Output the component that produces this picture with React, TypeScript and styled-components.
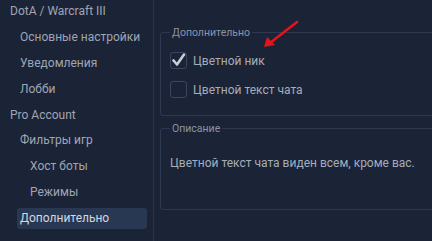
import React from "react";
import styled, { createGlobalStyle } from "styled-components";

const Global = createGlobalStyle`
  html, body { margin: 0; padding: 0; background: #1b2336; overflow: hidden; }
  body { font-family: Roboto, "Noto Sans", sans-serif; }
`;

const Page = styled.div`
  position: relative;
  display: flex;
  width: 432px;
  height: 241px;
  background: #1b2336;
  overflow: hidden;
`;

const Sidebar = styled.nav`
  flex: 0 0 153px;
  border-right: 1px solid #28324a;
  display: flex;
  flex-direction: column;
  margin-top: -1px;
`;

const Item = styled.div`
  height: 25.8px;
  display: flex;
  align-items: center;
  flex: 0 0 auto;
`;

const ItemLabel = styled.span<{ $level: number; $active?: boolean }>`
  margin-left: ${(p) => 7 + p.$level * 10}px;
  width: ${(p) => 140 - p.$level * 10 - 3}px;
  padding-left: 3px;
  height: 21px;
  line-height: 21px;
  border-radius: 3px;
  font-size: 12px;
  color: ${(p) => (p.$active ? "#d3d7de" : "#9ea6b5")};
  background: ${(p) => (p.$active ? "#283852" : "transparent")};
  white-space: nowrap;
`;

const Content = styled.main`
  flex: 0 0 310px;
  display: flex;
  flex-direction: column;
  align-items: flex-start;
  gap: 6px;
  padding: 26px 0 0 6px;
`;

const Group = styled.fieldset<{ $h: number }>`
  margin: 0;
  width: 300px;
  height: ${(p) => p.$h}px;
  box-sizing: border-box;
  border: 1px solid #2d3851;
  border-radius: 3px;
  padding: 0 0 0 9px;
  min-width: 0;
`;

const Legend = styled.legend`
  font-size: 10.5px;
  line-height: 13px;
  color: #8b94a6;
  padding: 0 2px;
  margin-left: 0;
`;

const Options = styled.div`
  display: flex;
  flex-direction: column;
  gap: 12px;
  padding-top: 13px;
`;

const Option = styled.label`
  display: flex;
  align-items: center;
  gap: 6px;
  height: 17px;
  font-size: 12px;
  color: #a6adba;
`;

const Box = styled.span`
  width: 17px;
  height: 17px;
  box-sizing: border-box;
  border: 1px solid #3a4661;
  border-radius: 3px;
  display: flex;
  align-items: center;
  justify-content: center;
  flex: 0 0 17px;
`;

const Description = styled.p`
  margin: 0;
  padding-top: 20px;
  font-size: 12px;
  line-height: 16px;
  color: #a6adba;
  white-space: nowrap;
`;

const Arrow = styled.svg`
  position: absolute;
  left: 258px;
  top: 16px;
  width: 46px;
  height: 36px;
  pointer-events: none;
`;

const items: { label: string; level: number; active?: boolean }[] = [
  { label: "DotA / Warcraft III", level: 0 },
  { label: "Основные настройки", level: 1 },
  { label: "Уведомления", level: 1 },
  { label: "Лобби", level: 1 },
  { label: "Pro Account", level: 0 },
  { label: "Фильтры игр", level: 1 },
  { label: "Хост боты", level: 2 },
  { label: "Режимы", level: 2 },
  { label: "Дополнительно", level: 1, active: true },
];

const Check = () => (
  <svg width="15" height="15" viewBox="0 0 15 15">
    <path d="M2.5 7.5 L6 11.5 L13 1.5" fill="none" stroke="#c9cdd5" strokeWidth="2.6" strokeLinecap="round" strokeLinejoin="round" />
  </svg>
);

export default function App() {
  return (
    <Page>
      <Global />
      <Sidebar>
        {items.map((it) => (
          <Item key={it.label}>
            <ItemLabel $level={it.level} $active={it.active}>{it.label}</ItemLabel>
          </Item>
        ))}
      </Sidebar>
      <Content>
        <Group $h={90}>
          <Legend>Дополнительно</Legend>
          <Options>
            <Option>
              <Box><Check /></Box>
              Цветной ник
            </Option>
            <Option>
              <Box />
              Цветной текст чата
            </Option>
          </Options>
        </Group>
        <Group $h={88}>
          <Legend>Описание</Legend>
          <Description>Цветной текст чата виден всем, кроме вас.</Description>
        </Group>
      </Content>
      <Arrow viewBox="0 0 46 36">
        <line x1="39" y1="6" x2="12" y2="27" stroke="#e3141b" strokeWidth="2.6" strokeLinecap="round" />
        <polygon points="6,31 9,21 17,29" fill="#e3141b" />
      </Arrow>
    </Page>
  );
}
